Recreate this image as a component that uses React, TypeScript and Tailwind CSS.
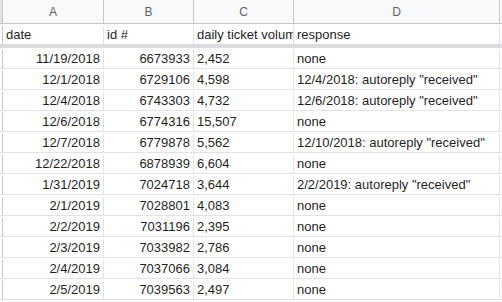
const ROWS = [
  ["11/19/2018", "6673933", "2,452", "none"],
  ["12/1/2018", "6729106", "4,598", '12/4/2018: autoreply "received"'],
  ["12/4/2018", "6743303", "4,732", '12/6/2018: autoreply "received"'],
  ["12/6/2018", "6774316", "15,507", "none"],
  ["12/7/2018", "6779878", "5,562", '12/10/2018: autoreply "received"'],
  ["12/22/2018", "6878939", "6,604", "none"],
  ["1/31/2019", "7024718", "3,644", '2/2/2019: autoreply "received"'],
  ["2/1/2019", "7028801", "4,083", "none"],
  ["2/2/2019", "7031196", "2,395", "none"],
  ["2/3/2019", "7033982", "2,786", "none"],
  ["2/4/2019", "7037066", "3,084", "none"],
  ["2/5/2019", "7039563", "2,497", "none"],
];

const cols = "grid grid-cols-[3px_101px_90px_100px_206px_1fr]";

const App = () => {
  return (
    <div className="w-[502px] h-[302px] overflow-hidden bg-white text-[13px] text-[#1f1f1f] font-['Liberation_Sans',Arial,sans-serif]">
      {/* Column letters */}
      <div className={`${cols} h-[24px] bg-[#f8f9fa] border-b border-[#c4c7c5] text-[12px] text-[#5f6368]`}>
        <div className="bg-[#e1e3e6] border-r border-[#c4c7c5]"></div>
        {["A", "B", "C", "D"].map((l) => (
          <div key={l} className="flex items-center justify-center border-r border-[#c4c7c5]">
            {l}
          </div>
        ))}
        <div></div>
      </div>

      {/* Header row */}
      <div className={`${cols} h-[20px] pt-[2px] leading-[18px]`}>
        <div className="border-r border-[#c4c7c5]"></div>
        <div className="px-[3px] border-r border-[#e2e3e3]">date</div>
        <div className="px-[3px] border-r border-[#e2e3e3]">id #</div>
        <div className="pl-[3px] border-r border-[#e2e3e3] overflow-hidden whitespace-nowrap">daily ticket volume</div>
        <div className="px-[3px] border-r border-[#e2e3e3]">response</div>
        <div></div>
      </div>

      {/* Freeze bar */}
      <div className="h-[4px] bg-[#dadce0]"></div>

      {/* Data rows */}
      {ROWS.map((r, i) => (
        <div key={i} className={`${cols} h-[21px] pt-[2px] leading-[18px] border-b border-[#e2e3e3]`}>
          <div className="border-r border-[#c4c7c5]"></div>
          <div className="px-[3px] text-right border-r border-[#e2e3e3]">{r[0]}</div>
          <div className="px-[3px] text-right border-r border-[#e2e3e3]">{r[1]}</div>
          <div className="px-[3px] border-r border-[#e2e3e3]">{r[2]}</div>
          <div className="px-[3px] border-r border-[#e2e3e3] whitespace-nowrap overflow-hidden">{r[3]}</div>
          <div></div>
        </div>
      ))}
    </div>
  );
};

export default App;
